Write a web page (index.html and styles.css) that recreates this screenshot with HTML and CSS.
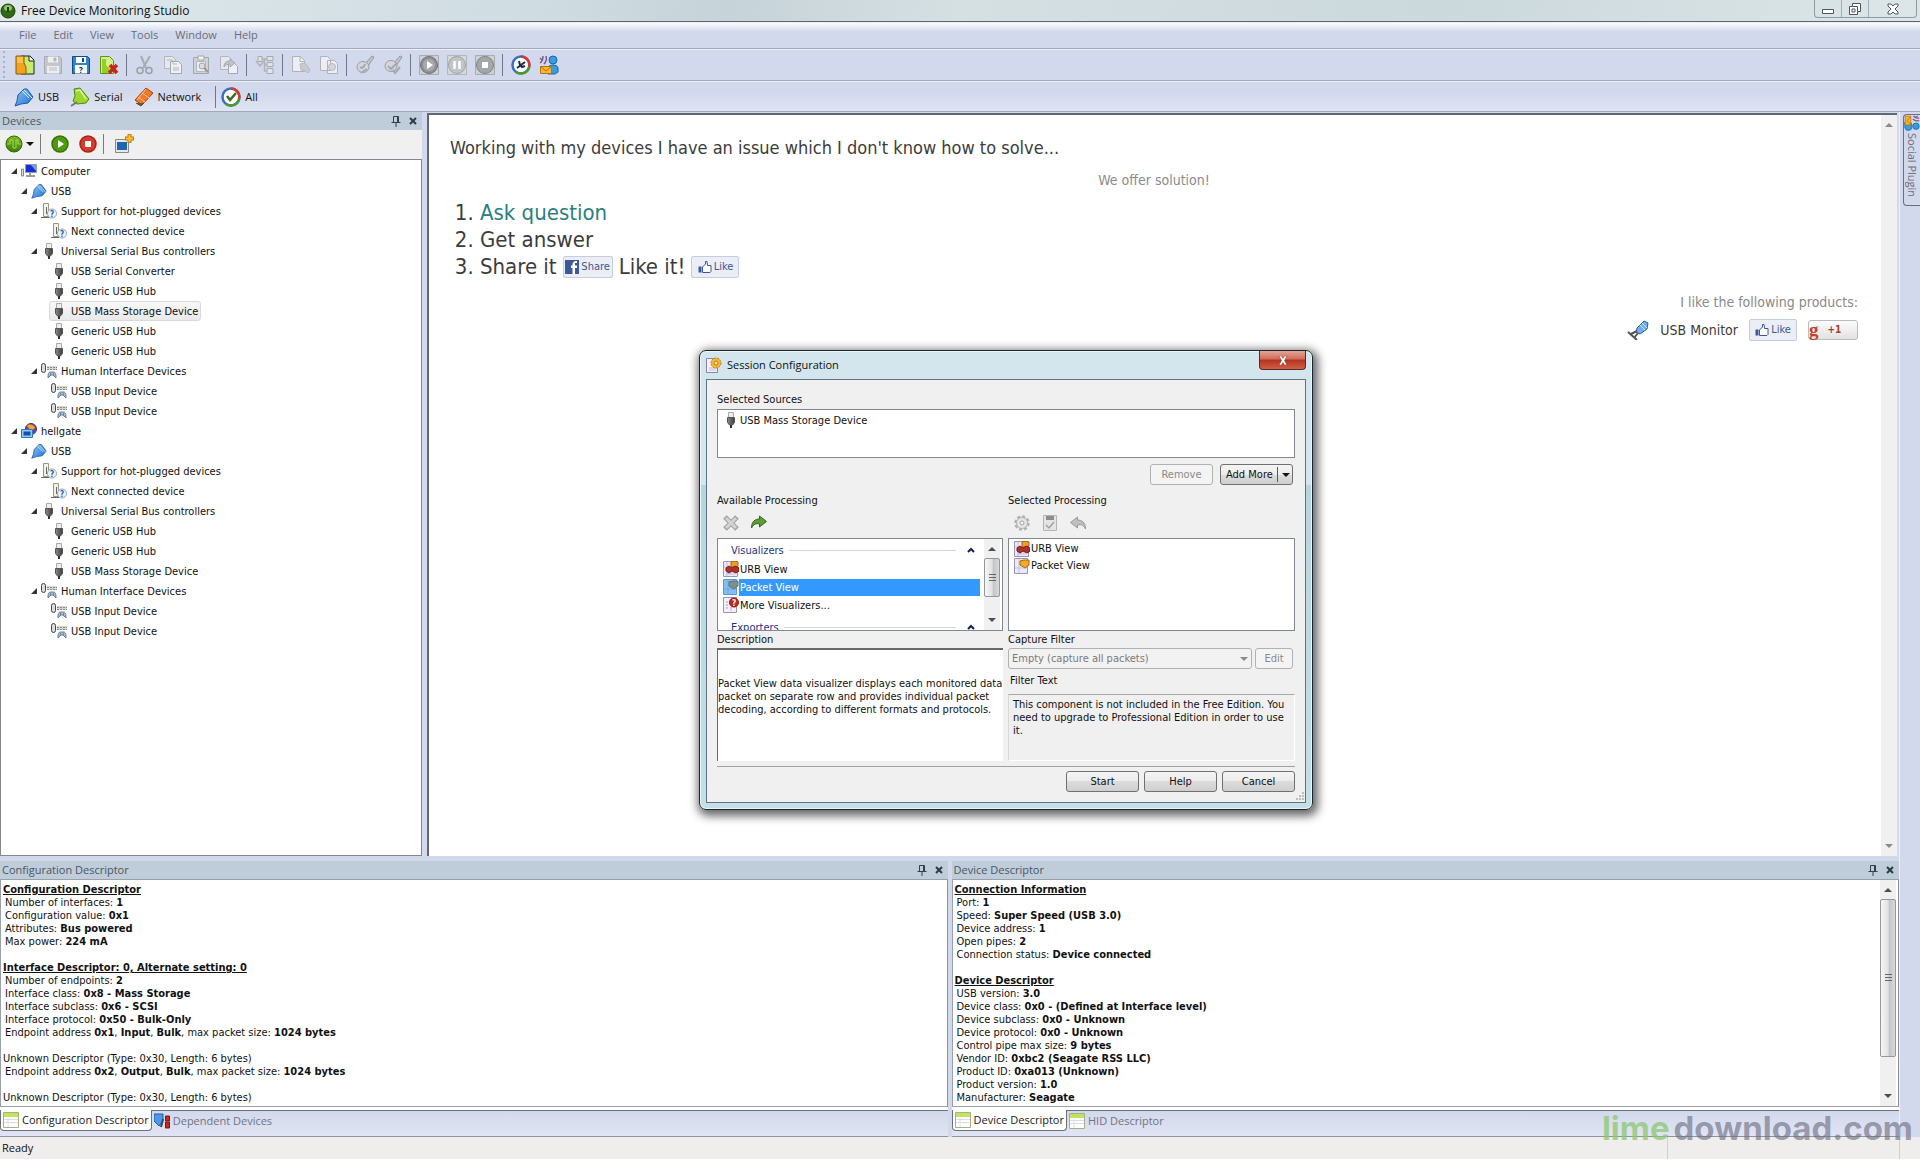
FILE: index.html
```html
<!DOCTYPE html>
<html lang="en">
<head>
  <meta charset="UTF-8">
  <meta name="viewport" content="width=device-width, initial-scale=1">
  <title>Free Device Monitoring Studio</title>
  <link rel="stylesheet" href="styles.css">
</head>
<body>
  <!-- Gradients must stay rendered, the sprite itself is hidden -->
  <svg class="gradients" aria-hidden="true">
    <defs>
      <linearGradient id="gBlue" x1="0" y1="0" x2="1" y2="1"><stop offset="0" stop-color="#8cc6fa"/><stop offset="1" stop-color="#1d6fd0"/></linearGradient>
      <linearGradient id="gGreen" x1="0" y1="0" x2="0" y2="1"><stop offset="0" stop-color="#7fbf1c"/><stop offset="1" stop-color="#3b7d06"/></linearGradient>
      <linearGradient id="gPlug" x1="0" y1="0" x2="1" y2="0"><stop offset="0" stop-color="#8a8a8a"/><stop offset="1" stop-color="#3c3c3c"/></linearGradient>
    </defs>
  </svg>
  <svg class="sprite" aria-hidden="true">
    <symbol id="app" viewBox="0 0 16 16"><circle cx="8" cy="8" r="7" fill="#2f6b12" stroke="#1c3d0c"/><ellipse cx="8" cy="5" rx="4" ry="3" fill="#8fc763"/><path d="M8 4v5" stroke="#1c3d0c" stroke-width="2"/></symbol>
    <symbol id="open" viewBox="0 0 20 20"><path d="M6 1h9l4 4v14H6z" fill="#c9ea6a" stroke="#222"/><path d="M14 1v5h5" fill="#fff" stroke="#222"/><path d="M1 1h8v7l2 4v7H1z" fill="#f2a21e" stroke="#8a5a10"/><path d="M2 2h6v6H2z" fill="#f8c04c"/></symbol>
    <symbol id="save-off" viewBox="0 0 20 20"><path d="M1.500 1.500h15l2 2v15h-17z" fill="#c4c6ca" stroke="#a9abb0"/><path d="M5 1.500h10v6H5zM4 11h12v7.500H4z" fill="#eceef2"/><path d="M11 3h2v3h-2zM6 13h8M6 15h8" fill="#a9abb0" stroke="#bbb"/></symbol>
    <symbol id="save-as" viewBox="0 0 20 20"><path d="M1.500 1.500h15l2 2v15h-17z" fill="#2f86cf" stroke="#0d4a86"/><path d="M5 2h10v6H5zM4 10h12v8.500H4z" fill="#fff"/><path d="M11 3h2v4h-2z" fill="#0d4a86"/><text x="10" y="17.500" font-size="8" font-weight="700" text-anchor="middle" fill="#123">?</text></symbol>
    <symbol id="close-doc" viewBox="0 0 20 20"><path d="M1.500 1.500h9l4 4v13h-13z" fill="#d6f08a" stroke="#5c9410"/><path d="M3 4h4v6l4 4-2 4H3z" fill="#97cc2b"/><path d="M11 10l7 8M18 10l-8 8" stroke="#c3271b" stroke-width="3.500"/></symbol>
    <symbol id="cut" viewBox="0 0 20 20"><path d="M6 1l5 12M15 1L8 13" stroke="#a9abb0" stroke-width="2" fill="none"/><circle cx="5" cy="15.500" r="3" fill="none" stroke="#9c9ea4" stroke-width="1.500"/><circle cx="14" cy="15.500" r="3" fill="none" stroke="#9c9ea4" stroke-width="1.500"/></symbol>
    <symbol id="copy" viewBox="0 0 20 20"><path d="M1.500 1.500h8l3 3v9h-11z" fill="#e6e8ee" stroke="#b4b6bc"/><path d="M7.500 6.500h8l3 3v9h-11z" fill="#eef0f5" stroke="#a6a8ae"/><path d="M4 5h6v4h4M10 13h6M10 15h6" fill="none" stroke="#b4b6bc"/></symbol>
    <symbol id="paste" viewBox="0 0 20 20"><path d="M2.500 2.500h15v16h-15z" fill="#d0d2d8" stroke="#a4a6ac"/><path d="M7 1h6v4H7z" fill="#f2f2f5" stroke="#a4a6ac"/><path d="M5.500 6.500h9v10h-9z" fill="#eceef3" stroke="#b4b6bc"/><circle cx="11" cy="11" r="3" fill="#dadce2" stroke="#a4a6ac"/><path d="M13 13l4 4" stroke="#94969c" stroke-width="2"/></symbol>
    <symbol id="move" viewBox="0 0 20 20"><path d="M1.500 1.500h8l3 3v10h-11z" fill="#e6e8ee" stroke="#b4b6bc"/><path d="M9.500 8.500h6l3 3v7h-9z" fill="#eef0f5" stroke="#a6a8ae"/><path d="M5 12c0-5 3-6 6-6V4l5 4-5 4v-3c-3 0-4 1-6 3z" fill="#c2c4ca" stroke="#a6a8ae"/></symbol>
    <symbol id="struct" viewBox="0 0 20 20"><path d="M3 1.500h4v5H3zM12 1.500h6v4h-6zM12 7.500h6v4h-6zM12 13.500h6v5h-6z" fill="#e2e4ea" stroke="#a6a8ae"/><path d="M7 4h5M9.500 4v12H12M9.500 9.500H12M1 6l4 5 4-5" fill="none" stroke="#b0b2b8" stroke-width="1.500"/></symbol>
    <symbol id="find" viewBox="0 0 20 20"><path d="M1.500 1.500h8l4 4v11h-12z" fill="#eceef3" stroke="#b0b2b8"/><path d="M9 1.500v5h4" fill="none" stroke="#b0b2b8"/><path d="M9 9l5-1 3 4 2 3-2 3-3-2-4-1z" fill="#c8cad0" stroke="#b8bac0"/></symbol>
    <symbol id="find-all" viewBox="0 0 20 20"><path d="M1.500 1.500h7l3 3v11h-10zM8.500 5.500h7l3 3v10h-10z" fill="#eceef3" stroke="#b0b2b8"/><circle cx="13" cy="12" r="3.500" fill="#d4d6dc" stroke="#b8bac0"/></symbol>
    <symbol id="brush" viewBox="0 0 20 20"><path d="M10 9l7-8 2 1-6 9z" fill="#c6c8ce" stroke="#94969c"/><ellipse cx="8" cy="12" rx="6" ry="5.500" fill="#d4d6dc" stroke="#9c9ea4"/><path d="M5 12c2 2 4 0 5-3M6 18l6-4" stroke="#a6a8ae" stroke-width="2" fill="none"/></symbol>
    <symbol id="brush-tick" viewBox="0 0 20 20"><path d="M10 9l7-8 2 1-6 9z" fill="#c6c8ce" stroke="#94969c"/><ellipse cx="8" cy="11" rx="6" ry="5.500" fill="#d4d6dc" stroke="#9c9ea4"/><path d="M5 11l3 3 6-6M10 15l2 3 5-6" stroke="#a6a8ae" stroke-width="2" fill="none"/></symbol>
    <symbol id="play-off" viewBox="0 0 20 20"><path d="M.500.500h19v19H.500z" fill="#cfd0d4" stroke="#aaacb2"/><circle cx="10" cy="10" r="8.500" fill="#8f9196" stroke="#6e7076"/><circle cx="10" cy="10" r="6" fill="#a8aaae"/><path d="M8 6l6 4-6 4z" fill="#fff"/></symbol>
    <symbol id="pause-off" viewBox="0 0 20 20"><path d="M.500.500h19v19H.500z" fill="#d6d7da" stroke="#b4b6bc"/><circle cx="10" cy="10" r="8.500" fill="#c2c4c8" stroke="#a0a2a8"/><path d="M7.500 6v8M12.500 6v8" stroke="#fff" stroke-width="2.500"/></symbol>
    <symbol id="stop-off" viewBox="0 0 20 20"><path d="M.500.500h19v19H.500z" fill="#cfd0d4" stroke="#aaacb2"/><circle cx="10" cy="10" r="8.500" fill="#a4a6aa" stroke="#808288"/><path d="M7 7h6v6H7z" fill="#fff"/></symbol>
    <symbol id="ring" viewBox="0 0 20 20"><circle cx="10" cy="10" r="8.500" fill="#fff" stroke="#3b6fc4" stroke-width="2.500"/><path d="M10 1.500A8.500 8.500 0 0 1 18 12" fill="none" stroke="#d83a2a" stroke-width="2.500"/><path d="M18 12a8.500 8.500 0 0 1-13 5" fill="none" stroke="#4c9a2a" stroke-width="2.500"/></symbol>
    <symbol id="gauge" viewBox="0 0 20 20"><use href="#ring"/><path d="M6 13l8-6M8 6l1 4 2 2 3-1" stroke="#1c2a44" stroke-width="2" fill="none"/></symbol>
    <symbol id="all" viewBox="0 0 20 20"><use href="#ring"/><path d="M6 9l3 4 6-7" stroke="#3c6e22" stroke-width="2.500" fill="none"/></symbol>
    <symbol id="social" viewBox="0 0 20 20"><path d="M1 3l2 2M4 1c0 3 0 5-3 7M7 1c1 3 0 6-2 8" stroke="#7b5c8c" stroke-width="1.500" fill="none"/><circle cx="14" cy="5" r="4" fill="#3a9be0" stroke="#1767a8"/><path d="M9 19V13c0-4 10-4 10 0v4l-3 2z" fill="#3a9be0" stroke="#1767a8"/><path d="M1.500 11.500h11v7h-11z" fill="#f7b733" stroke="#b87208"/><path d="M2 12l5 4 5-4" fill="none" stroke="#b87208"/></symbol>
    <symbol id="usb" viewBox="0 0 20 20"><path d="M1 19l2-5 1-6 6-6 3 0 6 8-5 6-7 1z" fill="url(#gBlue)" stroke="#1d5aa8"/><path d="M10 3l8 8M8 4l7 7" stroke="#d0e8ff"/></symbol>
    <symbol id="serial" viewBox="0 0 20 20"><path d="M4 2l6-1 9 11-3 4-9 1-4-3 2-5z" fill="#9ad82c" stroke="#4c8a10"/><path d="M6 4l4-1 6 9" fill="none" stroke="#dff6a8" stroke-width="1.500"/><path d="M1 19l6-4" stroke="#777" stroke-width="2"/></symbol>
    <symbol id="network" viewBox="0 0 20 20"><path d="M1 13L12 1l7 5L8 18z" fill="#f07a28" stroke="#a4410c"/><path d="M4 10l7 5M8 6l7 5M12 2l-9 11" stroke="#fbc29a"/><path d="M2 16l5 3 3-3" fill="#6e5040" stroke="#553"/></symbol>
    <symbol id="chip" viewBox="0 0 18 18"><circle cx="9" cy="9" r="8" fill="url(#gGreen)" stroke="#2f6606"/><path d="M2 9h3V5h3v8h3V5h2v4h3" fill="none" stroke="#a4d468"/></symbol>
    <symbol id="play" viewBox="0 0 18 18"><circle cx="9" cy="9" r="8" fill="#4f9a0c" stroke="#34720a" stroke-width="1.500"/><path d="M7 5l6 4-6 4z" fill="#fff"/></symbol>
    <symbol id="stop" viewBox="0 0 18 18"><circle cx="9" cy="9" r="8" fill="#d63a2c" stroke="#a8241a" stroke-width="1.500"/><path d="M6 6h6v6H6z" fill="#fff"/></symbol>
    <symbol id="add-view" viewBox="0 0 20 20"><path d="M1.500 5.500h13v13h-13z" fill="#e8e8e8" stroke="#888"/><path d="M3 8h10v8H3z" fill="#1d66b4"/><path d="M15.500 0v9M11 4.500h9" stroke="#c97a0a" stroke-width="4"/><path d="M15.500 1v7M12 4.500h7" stroke="#fbc23c" stroke-width="2"/></symbol>
    <symbol id="computer" viewBox="0 0 16 16"><path d="M.500 6h2v7h-2z" fill="#ddd" stroke="#888"/><path d="M4.500 1.500h11v8h-11z" fill="#1a2fd0" stroke="#99a"/><path d="M10 2l5 0v6z" fill="#6fa0ff"/><path d="M9 10v2M5 13h9" stroke="#99a" stroke-width="2"/></symbol>
    <symbol id="host" viewBox="0 0 16 16"><circle cx="10" cy="6" r="5.500" fill="#7a3fa0" stroke="#4a2a6a"/><path d="M6 3c3-3 7-1 8 2l-4 3z" fill="#f5a81c"/><path d="M.500 6.500h11v8H.500z" fill="#8fc8f4" stroke="#2a78c0"/><path d="M2.500 8.500h7v4h-7z" fill="#1550a8"/></symbol>
    <symbol id="unknown" viewBox="0 0 16 16"><path d="M2.500.500h5v13h-5z" fill="#f2f2ea" stroke="#99987f"/><path d="M0 14.500h8M5.500 4v7" stroke="#666"/><circle cx="11" cy="10.500" r="4.500" fill="#eef5fc" stroke="#8fa3b8"/><text x="11" y="13.500" font-size="8" font-weight="700" text-anchor="middle" fill="#2a5fa8">?</text></symbol>
    <symbol id="plug" viewBox="0 0 16 16"><path d="M5.500.500h5v5h-5z" fill="#eee" stroke="#aaa"/><path d="M4.500 5.500h7v5l-2 2.500h-3l-2-2.500z" fill="url(#gPlug)" stroke="#555"/><path d="M8 13v3" stroke="#333" stroke-width="2"/></symbol>
    <symbol id="hid" viewBox="0 0 16 16"><rect x=".500" y=".500" width="4" height="9" rx="2" fill="#ddd" stroke="#444"/><path d="M6 3h10v4H6z" fill="#d4d6d8"/><path d="M6 4.500h10M6 6.500h10" stroke="#8a8a8a" stroke-dasharray="2 1"/><path d="M7 15c0-6 1-6 4-6s4 0 4 6l-3-3h-2z" fill="#a9bccb" stroke="#6c7f90"/><path d="M9 11h1M12 11h1" stroke="#1f5fb0"/></symbol>
    <symbol id="monitor-app" viewBox="0 0 22 20"><path d="M10 8l7-7 4 2-1 6-7 5-4-2z" fill="#6fb0f0" stroke="#2a5f9c"/><path d="M13 5l5 5M15 3l5 5" stroke="#cfe6fc"/><path d="M1 12l9 8M10 11l-6 3M11 13l-4 5" stroke="#555" stroke-width="2"/></symbol>
    <symbol id="thumb" viewBox="0 0 14 12"><path d="M.500 5.500h3v6h-3z" fill="#3b5998"/><path d="M4.500 6l3-3V.500h1.500l.500 4h3.500v6l-1 1H4.500z" fill="#fff" stroke="#3b5998"/></symbol>
    <symbol id="fb" viewBox="0 0 14 14"><path d="M0 0h14v14H0z" fill="#3b5998"/><path d="M12 3h-2v2.500h2V8h-2v6H7.500V8H6V5.500h1.500C7.500 2 8.500 1 12 1z" fill="#fff"/></symbol>
    <symbol id="session" viewBox="0 0 16 16"><path d="M.500 1.500h11v14H.500z" fill="#f5f1fa" stroke="#8a84a4"/><path d="M3 11h7M3 13h7" stroke="#c4bcd8"/><circle cx="10" cy="6" r="5" fill="#f7b733" stroke="#c07a10" stroke-dasharray="2 1"/><circle cx="10" cy="6" r="2" fill="#ffe7a8" stroke="#c07a10"/></symbol>
    <symbol id="x-off" viewBox="0 0 16 16"><path d="M2 2l12 12M14 2L2 14" stroke="#a0a0a0" stroke-width="5"/><path d="M3 3l10 10M13 3L3 13" stroke="#d4d4d4" stroke-width="3"/></symbol>
    <symbol id="add" viewBox="0 0 16 16"><path d="M.500 13c0-7 4-9 8-9V1l7 5.500-7 5.500V9C5 8 3 9 .500 13z" fill="#5c9c34" stroke="#33691a"/></symbol>
    <symbol id="undo-off" viewBox="0 0 16 16"><path d="M15.500 14c0-7-4-9-8-9V2l-7 5.500L7.500 13v-3c4-1 6 0 8 4z" fill="#c0c0c0" stroke="#999"/></symbol>
    <symbol id="gear-off" viewBox="0 0 16 16"><circle cx="8" cy="8" r="6.500" fill="#e2e2e2" stroke="#b0b0b0" stroke-width="2.500" stroke-dasharray="3 2"/><circle cx="8" cy="8" r="5.500" fill="#e6e6e6" stroke="#b4b4b4"/><circle cx="8" cy="8" r="2" fill="#f4f4f4" stroke="#a4a4a4"/></symbol>
    <symbol id="disk-off" viewBox="0 0 16 16"><path d="M1.500.500h13v15h-13z" fill="#e4e4e4" stroke="#b4b4b4"/><path d="M4 1h8v4H4z" fill="#8c8c8c"/><path d="M4 10l3 3 5-6" fill="none" stroke="#a0a0a0" stroke-width="1.500"/></symbol>
    <symbol id="urb" viewBox="0 0 16 16"><path d="M.500.500h14v15H.500z" fill="#edeaf8" stroke="#9a94b8"/><path d="M1 6h13M3 11h9M3 13h9M4 1v14" stroke="#c4bee0"/><path d="M8 1l3-1 4 1v4l-4 2-3-2z" fill="#f0a020" stroke="#a8660c"/><path d="M3 7l3-2 3 2 3-2 4 2v3l-3 2-4-2-3 2-3-2z" fill="#b0302a" stroke="#78181a"/></symbol>
    <symbol id="packet" viewBox="0 0 16 16"><path d="M.500.500h13v15H.500z" fill="#edeaf8" stroke="#9a94b8"/><path d="M1 10h12M5 1v14" stroke="#c4bee0"/><path d="M6 3l4-1 5 0v5l-4 3-5-3z" fill="#f2ac24" stroke="#a8660c"/></symbol>
    <symbol id="packet-sel" viewBox="0 0 16 16"><path d="M.500.500h13v15H.500z" fill="#86bdf2" stroke="#5a98d4"/><path d="M1 10h12M5 1v14" stroke="#6aa8e6"/><path d="M6 3l4-1 5 0v5l-4 3-5-3z" fill="#7f9186" stroke="#5a7480"/></symbol>
    <symbol id="more" viewBox="0 0 16 16"><path d="M.500.500h13v15H.500z" fill="#f4f0fa" stroke="#9a94b8"/><path d="M4 4v9M8 10v4" stroke="#d08a9a" stroke-dasharray="2 1"/><circle cx="11" cy="5.500" r="4.500" fill="#c4281c" stroke="#8a1410"/><text x="11" y="8.500" font-size="8" font-weight="700" text-anchor="middle" fill="#fff">?</text></symbol>
    <symbol id="sheet" viewBox="0 0 16 16"><path d="M.500.500h15v15H.500z" fill="#fff" stroke="#a4b08c"/><path d="M1 1h14v4H1z" fill="#c3e35a"/><path d="M1 7.500h14M1 10.500h14M5 6v9" stroke="#dcdce8"/></symbol>
    <symbol id="depend" viewBox="0 0 16 16"><path d="M0 1h9v7l-4 5-5-5z" fill="#4a9ae8" stroke="#1d5aa8"/><path d="M7 14l2-8" stroke="#445" stroke-width="2"/><path d="M11.500 3h4v5h-4zM11.500 9h4v6h-4z" fill="#c8281e" stroke="#7a1410"/></symbol>
    <symbol id="pin" viewBox="0 0 10 12"><path d="M2.500 7V1.500h5V7M6.500 2v5M.500 7.500h9M5 8v4" fill="none" stroke="#2f3f4f"/></symbol>
    <symbol id="close" viewBox="0 0 8 8"><path d="M1 1l6 6M7 1L1 7" stroke="#2c3a48" stroke-width="2"/></symbol>
    <symbol id="expand" viewBox="0 0 6 6"><path d="M6 0v6H0z" fill="#333"/></symbol>
    <symbol id="up" viewBox="0 0 8 4"><path d="M4 0l4 4H0z" fill="currentColor"/></symbol>
    <symbol id="down" viewBox="0 0 8 4"><path d="M0 0h8L4 4z" fill="currentColor"/></symbol>
    <symbol id="chevron" viewBox="0 0 8 6"><path d="M1 5l3-3 3 3" fill="none" stroke="#10205c" stroke-width="2"/></symbol>
  </svg>

  <header class="titlebar">
    <svg class="i16"><use href="#app"/></svg>
    <h1>Free Device Monitoring Studio</h1>
    <div class="window-buttons">
      <button type="button" aria-label="Minimize"><svg viewBox="0 0 12 12"><path d="M.500 6.500h11v4H.500z" fill="#fff" stroke="#4a5560"/></svg></button>
      <button type="button" aria-label="Restore"><svg viewBox="0 0 12 12"><path d="M3.500.500h8v8h-3v3h-8v-8h3z" fill="#fff" stroke="#4a5560"/><path d="M3.500 3.500h5v5M3 6h3v3H3z" fill="none" stroke="#4a5560"/></svg></button>
      <button type="button" class="wide" aria-label="Close"><svg viewBox="0 0 12 12"><path d="M1 1h3l2 2 2-2h3v2L8 6l3 3v2H8L6 9l-2 2H1V9l3-3-3-3z" fill="#fff" stroke="#4a5560"/></svg></button>
    </div>
  </header>

  <nav class="bar menu">
    <button type="button">File</button>
    <button type="button">Edit</button>
    <button type="button">View</button>
    <button type="button">Tools</button>
    <button type="button">Window</button>
    <button type="button">Help</button>
  </nav>

  <div class="bar tools">
    <button type="button" aria-label="Open"><svg class="i20"><use href="#open"/></svg></button>
    <button type="button" aria-label="Save" disabled><svg class="i20"><use href="#save-off"/></svg></button>
    <button type="button" aria-label="Save as"><svg class="i20"><use href="#save-as"/></svg></button>
    <button type="button" aria-label="Close document"><svg class="i20"><use href="#close-doc"/></svg></button>
    <i class="sep"></i>
    <button type="button" aria-label="Cut" disabled><svg class="i20"><use href="#cut"/></svg></button>
    <button type="button" aria-label="Copy" disabled><svg class="i20"><use href="#copy"/></svg></button>
    <button type="button" aria-label="Paste" disabled><svg class="i20"><use href="#paste"/></svg></button>
    <button type="button" aria-label="Copy to" disabled><svg class="i20"><use href="#move"/></svg></button>
    <i class="sep"></i>
    <button type="button" aria-label="Structure" disabled><svg class="i20"><use href="#struct"/></svg></button>
    <i class="sep"></i>
    <button type="button" aria-label="Find" disabled><svg class="i20"><use href="#find"/></svg></button>
    <button type="button" aria-label="Find all" disabled><svg class="i20"><use href="#find-all"/></svg></button>
    <i class="sep"></i>
    <button type="button" aria-label="Clear" disabled><svg class="i20"><use href="#brush"/></svg></button>
    <button type="button" aria-label="Clear all" disabled><svg class="i20"><use href="#brush-tick"/></svg></button>
    <i class="sep"></i>
    <button type="button" aria-label="Start" disabled><svg class="i20"><use href="#play-off"/></svg></button>
    <button type="button" aria-label="Pause" disabled><svg class="i20"><use href="#pause-off"/></svg></button>
    <button type="button" aria-label="Stop" disabled><svg class="i20"><use href="#stop-off"/></svg></button>
    <i class="sep"></i>
    <button type="button" aria-label="Monitor"><svg class="i20"><use href="#gauge"/></svg></button>
    <button type="button" aria-label="Social"><svg class="i20"><use href="#social"/></svg></button>
  </div>

  <div class="bar filters">
    <button type="button"><svg class="i20"><use href="#usb"/></svg>USB</button>
    <button type="button"><svg class="i20"><use href="#serial"/></svg>Serial</button>
    <button type="button"><svg class="i20"><use href="#network"/></svg>Network</button>
    <i class="sep"></i>
    <button type="button"><svg class="i20"><use href="#all"/></svg>All</button>
  </div>

  <div class="workspace">
    <div class="main">
      <div class="upper">
        <section class="panel devices">
          <div class="panel-head">
            <h2>Devices</h2>
            <button type="button" aria-label="Pin"><svg class="pin"><use href="#pin"/></svg></button>
            <button type="button" aria-label="Close"><svg class="cross"><use href="#close"/></svg></button>
          </div>
          <div class="device-tools">
            <button type="button" class="drop" aria-label="Device"><svg class="i18"><use href="#chip"/></svg><svg class="arrow"><use href="#down"/></svg></button>
            <i class="sep"></i>
            <button type="button" aria-label="Start"><svg class="i18"><use href="#play"/></svg></button>
            <button type="button" aria-label="Stop"><svg class="i18"><use href="#stop"/></svg></button>
            <i class="sep"></i>
            <button type="button" aria-label="Add view"><svg class="i20"><use href="#add-view"/></svg></button>
          </div>
          <ul class="tree">
            <li><div class="row"><svg class="twist"><use href="#expand"/></svg><span class="node"><svg class="i16"><use href="#computer"/></svg>Computer</span></div>
              <ul>
                <li><div class="row"><svg class="twist"><use href="#expand"/></svg><span class="node"><svg class="i16"><use href="#usb"/></svg>USB</span></div>
                  <ul>
                    <li><div class="row"><svg class="twist"><use href="#expand"/></svg><span class="node"><svg class="i16"><use href="#unknown"/></svg>Support for hot-plugged devices</span></div>
                      <ul>
                        <li class="row leaf"><span class="node"><svg class="i16"><use href="#unknown"/></svg>Next connected device</span></li>
                      </ul>
                    </li>
                    <li><div class="row"><svg class="twist"><use href="#expand"/></svg><span class="node"><svg class="i16"><use href="#plug"/></svg>Universal Serial Bus controllers</span></div>
                      <ul>
                        <li class="row leaf"><span class="node"><svg class="i16"><use href="#plug"/></svg>USB Serial Converter</span></li>
                        <li class="row leaf"><span class="node"><svg class="i16"><use href="#plug"/></svg>Generic USB Hub</span></li>
                        <li class="row leaf"><span class="node current"><svg class="i16"><use href="#plug"/></svg>USB Mass Storage Device</span></li>
                        <li class="row leaf"><span class="node"><svg class="i16"><use href="#plug"/></svg>Generic USB Hub</span></li>
                        <li class="row leaf"><span class="node"><svg class="i16"><use href="#plug"/></svg>Generic USB Hub</span></li>
                      </ul>
                    </li>
                    <li><div class="row"><svg class="twist"><use href="#expand"/></svg><span class="node"><svg class="i16"><use href="#hid"/></svg>Human Interface Devices</span></div>
                      <ul>
                        <li class="row leaf"><span class="node"><svg class="i16"><use href="#hid"/></svg>USB Input Device</span></li>
                        <li class="row leaf"><span class="node"><svg class="i16"><use href="#hid"/></svg>USB Input Device</span></li>
                      </ul>
                    </li>
                  </ul>
                </li>
              </ul>
            </li>
            <li><div class="row"><svg class="twist"><use href="#expand"/></svg><span class="node"><svg class="i16"><use href="#host"/></svg>hellgate</span></div>
              <ul>
                <li><div class="row"><svg class="twist"><use href="#expand"/></svg><span class="node"><svg class="i16"><use href="#usb"/></svg>USB</span></div>
                  <ul>
                    <li><div class="row"><svg class="twist"><use href="#expand"/></svg><span class="node"><svg class="i16"><use href="#unknown"/></svg>Support for hot-plugged devices</span></div>
                      <ul>
                        <li class="row leaf"><span class="node"><svg class="i16"><use href="#unknown"/></svg>Next connected device</span></li>
                      </ul>
                    </li>
                    <li><div class="row"><svg class="twist"><use href="#expand"/></svg><span class="node"><svg class="i16"><use href="#plug"/></svg>Universal Serial Bus controllers</span></div>
                      <ul>
                        <li class="row leaf"><span class="node"><svg class="i16"><use href="#plug"/></svg>Generic USB Hub</span></li>
                        <li class="row leaf"><span class="node"><svg class="i16"><use href="#plug"/></svg>Generic USB Hub</span></li>
                        <li class="row leaf"><span class="node"><svg class="i16"><use href="#plug"/></svg>USB Mass Storage Device</span></li>
                      </ul>
                    </li>
                    <li><div class="row"><svg class="twist"><use href="#expand"/></svg><span class="node"><svg class="i16"><use href="#hid"/></svg>Human Interface Devices</span></div>
                      <ul>
                        <li class="row leaf"><span class="node"><svg class="i16"><use href="#hid"/></svg>USB Input Device</span></li>
                        <li class="row leaf"><span class="node"><svg class="i16"><use href="#hid"/></svg>USB Input Device</span></li>
                      </ul>
                    </li>
                  </ul>
                </li>
              </ul>
            </li>
          </ul>
        </section>

        <main class="document">
          <div class="page">
            <p class="lead">Working with my devices I have an issue which I don't know how to solve...</p>
            <p class="offer">We offer solution!</p>
            <ol class="steps">
              <li><a href="#">Ask question</a></li>
              <li>Get answer</li>
              <li><div class="share">Share it <button type="button" class="fb-button fb-share"><svg class="fb"><use href="#fb"/></svg>Share</button> Like it! <button type="button" class="fb-button"><svg class="thumb"><use href="#thumb"/></svg>Like</button></div></li>
            </ol>
            <div class="products">
              <p>I like the following products:</p>
              <div class="product">
                <svg class="product-icon"><use href="#monitor-app"/></svg>
                <span>USB Monitor</span>
                <button type="button" class="fb-button"><svg class="thumb"><use href="#thumb"/></svg>Like</button>
                <button type="button" class="plus-one"><span class="g">g</span>+1</button>
              </div>
            </div>
          </div>
          <div class="scroll idle"><svg class="sarrow"><use href="#up"/></svg><svg class="sarrow"><use href="#down"/></svg></div>
        </main>
      </div>

      <div class="lower">
        <section class="panel">
          <div class="panel-head">
            <h2>Configuration Descriptor</h2>
            <button type="button" aria-label="Pin"><svg class="pin"><use href="#pin"/></svg></button>
            <button type="button" aria-label="Close"><svg class="cross"><use href="#close"/></svg></button>
          </div>
          <div class="report">
            <div class="report-text">
              <h3>Configuration Descriptor</h3>
              <p>Number of interfaces: <b>1</b></p>
              <p>Configuration value: <b>0x1</b></p>
              <p>Attributes: <b>Bus powered</b></p>
              <p>Max power: <b>224 mA</b></p>
              <h3>Interface Descriptor: 0, Alternate setting: 0</h3>
              <p>Number of endpoints: <b>2</b></p>
              <p>Interface class: <b>0x8 - Mass Storage</b></p>
              <p>Interface subclass: <b>0x6 - SCSI</b></p>
              <p>Interface protocol: <b>0x50 - Bulk-Only</b></p>
              <p>Endpoint address <b>0x1</b>, <b>Input</b>, <b>Bulk</b>, max packet size: <b>1024 bytes</b></p>
              <p class="raw">Unknown Descriptor (Type: 0x30, Length: 6 bytes)</p>
              <p>Endpoint address <b>0x2</b>, <b>Output</b>, <b>Bulk</b>, max packet size: <b>1024 bytes</b></p>
              <p class="raw">Unknown Descriptor (Type: 0x30, Length: 6 bytes)</p>
            </div>
          </div>
          <div class="tabs">
            <button type="button" class="active"><svg class="i16"><use href="#sheet"/></svg>Configuration Descriptor</button>
            <button type="button"><svg class="i16"><use href="#depend"/></svg>Dependent Devices</button>
          </div>
        </section>

        <section class="panel">
          <div class="panel-head">
            <h2>Device Descriptor</h2>
            <button type="button" aria-label="Pin"><svg class="pin"><use href="#pin"/></svg></button>
            <button type="button" aria-label="Close"><svg class="cross"><use href="#close"/></svg></button>
          </div>
          <div class="report">
            <div class="report-text">
              <h3>Connection Information</h3>
              <p>Port: <b>1</b></p>
              <p>Speed: <b>Super Speed (USB 3.0)</b></p>
              <p>Device address: <b>1</b></p>
              <p>Open pipes: <b>2</b></p>
              <p>Connection status: <b>Device connected</b></p>
              <h3>Device Descriptor</h3>
              <p>USB version: <b>3.0</b></p>
              <p>Device class: <b>0x0 - (Defined at Interface level)</b></p>
              <p>Device subclass: <b>0x0 - Unknown</b></p>
              <p>Device protocol: <b>0x0 - Unknown</b></p>
              <p>Control pipe max size: <b>9 bytes</b></p>
              <p>Vendor ID: <b>0xbc2 (Seagate RSS LLC)</b></p>
              <p>Product ID: <b>0xa013 (Unknown)</b></p>
              <p>Product version: <b>1.0</b></p>
              <p>Manufacturer: <b>Seagate</b></p>
            </div>
            <div class="scroll"><svg class="sarrow"><use href="#up"/></svg><div class="track"><div class="thumb-bar" style="height: 84%"></div></div><svg class="sarrow"><use href="#down"/></svg></div>
          </div>
          <div class="tabs">
            <button type="button" class="active"><svg class="i16"><use href="#sheet"/></svg>Device Descriptor</button>
            <button type="button"><svg class="i16"><use href="#sheet"/></svg>HID Descriptor</button>
          </div>
        </section>
      </div>
    </div>

    <aside class="dock">
      <button type="button"><svg class="i16"><use href="#social"/></svg>Social Plugin</button>
    </aside>
  </div>

  <footer class="status"><span>Ready</span><span></span><span></span></footer>

  <div class="watermark"><span>lime</span>download.com</div>

  <div class="dialog" role="dialog" aria-labelledby="dialog-title">
    <div class="dialog-head">
      <svg class="i16"><use href="#session"/></svg>
      <h2 id="dialog-title">Session Configuration</h2>
      <button type="button" class="dialog-close" aria-label="Close"><svg viewBox="0 0 10 9"><path d="M1 0h2.500L5 2.500 6.500 0H9L6.500 4.500 9 9H6.500L5 6.500 3.500 9H1l2.500-4.500z" fill="#fff" stroke="#6a3a34" stroke-width=".500"/></svg></button>
    </div>
    <form class="dialog-body">
      <div class="label" id="lbl-sources">Selected Sources</div>
      <ul class="box sources" aria-labelledby="lbl-sources">
        <li><svg class="i16"><use href="#plug"/></svg>USB Mass Storage Device</li>
      </ul>
      <div class="source-actions">
        <button type="button" class="btn" disabled>Remove</button>
        <button type="button" class="btn split">Add More<i></i><svg class="arrow"><use href="#down"/></svg></button>
      </div>
      <div class="columns">
        <div class="col">
          <div class="label" id="lbl-available">Available Processing</div>
          <div class="mini-tools">
            <button type="button" aria-label="Remove" disabled><svg class="i16"><use href="#x-off"/></svg></button>
            <button type="button" aria-label="Add"><svg class="i16"><use href="#add"/></svg></button>
          </div>
          <div class="box list" aria-labelledby="lbl-available">
            <div class="groups">
              <div class="group"><span>Visualizers</span><i></i><svg class="chevron"><use href="#chevron"/></svg></div>
              <ul>
                <li><svg class="i16"><use href="#urb"/></svg><span>URB View</span></li>
                <li class="selected"><svg class="i16"><use href="#packet-sel"/></svg><span>Packet View</span></li>
                <li><svg class="i16"><use href="#more"/></svg><span>More Visualizers...</span></li>
              </ul>
              <div class="group"><span>Exporters</span><i></i><svg class="chevron"><use href="#chevron"/></svg></div>
            </div>
            <div class="scroll"><svg class="sarrow"><use href="#up"/></svg><div class="track"><div class="thumb-bar" style="height: 74%"></div></div><svg class="sarrow"><use href="#down"/></svg></div>
          </div>
          <div class="label">Description</div>
          <div class="description">Packet View data visualizer displays each monitored data<br>packet on separate row and provides individual packet<br>decoding, according to different formats and protocols.</div>
        </div>
        <div class="col">
          <div class="label" id="lbl-selected">Selected Processing</div>
          <div class="mini-tools">
            <button type="button" aria-label="Settings" disabled><svg class="i16"><use href="#gear-off"/></svg></button>
            <button type="button" aria-label="Save" disabled><svg class="i16"><use href="#disk-off"/></svg></button>
            <button type="button" aria-label="Undo" disabled><svg class="i16"><use href="#undo-off"/></svg></button>
          </div>
          <ul class="box list chosen" aria-labelledby="lbl-selected">
            <li><svg class="i16"><use href="#urb"/></svg>URB View</li>
            <li><svg class="i16"><use href="#packet"/></svg>Packet View</li>
          </ul>
          <label class="label" for="filter">Capture Filter</label>
          <div class="filter-row">
            <span class="select-wrap">
              <select id="filter" disabled><option>Empty (capture all packets)</option></select>
              <svg class="arrow"><use href="#down"/></svg>
            </span>
            <button type="button" class="btn" disabled>Edit</button>
          </div>
          <div class="label filter-label">Filter Text</div>
          <div class="filter-text">This component is not included in the Free Edition. You need to upgrade to Professional Edition in order to use it.</div>
        </div>
      </div>
      <div class="dialog-actions">
        <button type="button" class="btn">Start</button>
        <button type="button" class="btn">Help</button>
        <button type="button" class="btn">Cancel</button>
      </div>
      <svg class="grip" viewBox="0 0 9 9"><path d="M7 1h2M7 4h2M7 7h2M4 4h2M4 7h2M1 7h2" stroke="#c4bcbc" stroke-width="2"/></svg>
    </form>
  </div>
</body>
</html>
```
FILE: styles.css
```css
:root {
  --bar: #d3d9ec;
  --head: #bfcdda;
  --line: #828790;
  --ui: Tahoma, 'DejaVu Sans Condensed', 'Noto Sans', sans-serif;
  --title: 'Open Sans', 'Noto Sans', sans-serif;
}
* {
  box-sizing: border-box;
  margin: 0;
  padding: 0;
}
body {
  font: 11px/13px var(--ui);
  color: #111;
  background: #fff;
  display: flex;
  flex-direction: column;
  height: 100vh;
  overflow: hidden;
}
ul { list-style: none; }
button {
  font: inherit;
  color: inherit;
  background: none;
  border: none;
}
svg { display: block; flex: none; }
.gradients { position: absolute; width: 0; height: 0; }
.sprite { display: none; }
.i16 { width: 16px; height: 16px; }
.i18 { width: 18px; height: 18px; }
.i20 { width: 20px; height: 20px; }
.arrow { width: 8px; height: 4px; }
.pin { width: 10px; height: 12px; }
.cross { width: 8px; height: 8px; }

/* Title bar */
.titlebar {
  display: flex;
  align-items: center;
  gap: 5px;
  height: 22px;
  background: linear-gradient(100deg, #dfe9ed 0%, #cfdce1 28%, #c6d3d8 38%, #d5e0e3 50%, #cbd8dc 75%, #dce6e8 100%);
  border-bottom: 1px solid #5c646e;
}
.titlebar h1 {
  flex: 1;
  font: 12px/20px var(--title);
}
.window-buttons {
  display: flex;
  align-self: flex-start;
  height: 18px;
  margin-right: 3px;
  border: 1px solid #8e9ba3;
  border-top: none;
  border-radius: 0 0 4px 4px;
}
.window-buttons button {
  display: flex;
  align-items: center;
  justify-content: center;
  width: 27px;
  border-right: 1px solid #a3afb6;
}
.window-buttons button:last-child { border-right: none; }
.window-buttons .wide { width: 47px; }
.window-buttons svg { width: 12px; height: 12px; }

/* Tool bars */
.bar {
  display: flex;
  align-items: center;
  padding-left: 11px;
  background: radial-gradient(circle at 4px 3px, #a9b1c6 1px, transparent 1px) 0 0 / 8px 5px repeat-y, var(--bar);
  border-bottom: 1px solid #a4a9b8;
  box-shadow: inset 0 1px #eef0f8;
  font: 11px/16px var(--title);
}
.bar .sep {
  width: 8px;
  height: 22px;
  background: linear-gradient(#6f7688, #6f7688) 3px 0 / 1px 100% no-repeat;
}
.menu {
  gap: 1px;
  height: 27px;
  color: #6a6d78;
  background: linear-gradient(#fff, transparent 10px), var(--bar);
}
.menu button { padding: 0 8px; }
.tools { height: 32px; }
.tools button {
  display: flex;
  justify-content: center;
  width: 28px;
}
.filters {
  height: 31px;
  padding: 1px 0 0 14px;
  background: linear-gradient(var(--bar) 40%, #e0e4f4);
}
.filters button {
  display: flex;
  align-items: center;
  gap: 4px;
  padding-right: 11px;
}
.filters .sep { width: 9px; }

/* Layout */
.workspace {
  flex: 1;
  display: flex;
  min-height: 0;
  background: var(--bar);
}
.main {
  flex: 1;
  display: flex;
  flex-direction: column;
  gap: 5px;
  min-width: 0;
}
.upper {
  flex: 1;
  display: flex;
  gap: 5px;
  min-height: 0;
}
.lower {
  display: grid;
  grid-template-columns: 1fr 1fr;
  gap: 4px;
}
.panel {
  display: flex;
  flex-direction: column;
  min-width: 0;
}
.panel-head {
  display: flex;
  align-items: center;
  gap: 8px;
  height: 18px;
  padding: 0 5px 0 2px;
  background: var(--head);
}
.panel-head h2 {
  flex: 1;
  font: 11px/16px var(--title);
  color: #4a5663;
}

/* Devices */
.devices { width: 422px; }
.device-tools {
  display: flex;
  align-items: center;
  gap: 10px;
  height: 29px;
  padding: 0 0 2px 5px;
  background: #f0f0f0;
}
.device-tools .drop {
  display: flex;
  align-items: center;
  gap: 3px;
}
.device-tools .sep {
  width: 1px;
  height: 20px;
  margin-left: -4px;
  background: #7a7a7a;
}
.tree {
  flex: 1;
  padding-top: 1px;
  background: #fff;
  border: 1px solid var(--line);
}
.tree ul { padding-left: 10px; }
.row {
  display: flex;
  align-items: center;
  height: 20px;
  padding-left: 10px;
}
.leaf { padding-left: 18px; }
.twist {
  width: 6px;
  height: 6px;
  margin-right: 2px;
}
.node {
  display: flex;
  align-items: center;
  gap: 4px;
  height: 20px;
  padding: 0 2px 0 1px;
  border: 1px solid transparent;
  border-radius: 3px;
}
.current {
  background: linear-gradient(#f8f8f8, #e9e9e9);
  border-color: #d9d9d9;
}

/* Document */
.document {
  flex: 1;
  display: flex;
  min-width: 0;
  margin: 1px 2px 0 0;
  background: #fff;
  border: solid #62666e;
  border-width: 2px 0 0 2px;
  color: #3c3c3c;
}
.page {
  flex: 1;
  padding: 21px 23px 0 21px;
}
.lead { font-size: 18px; line-height: 24px; }
.offer {
  padding: 10px 0 9px;
  font-size: 14px;
  line-height: 20px;
  text-align: center;
  color: #8a8a8a;
}
.steps {
  padding-left: 30px;
  font-size: 22px;
  line-height: 27px;
}
.steps a { color: #2a8080; text-decoration: none; }
.share {
  display: flex;
  align-items: center;
  gap: 6px;
}
.fb-button {
  display: flex;
  align-items: center;
  justify-content: center;
  gap: 2px;
  width: 48px;
  height: 22px;
  background: #eceef6;
  border: 1px solid #c5cbe0;
  border-radius: 2px;
  font: 11px/14px var(--ui);
  color: #3b5998;
}
.fb-share { width: 50px; }
.fb { width: 14px; height: 14px; }
.thumb { width: 14px; height: 12px; }
.products {
  display: flex;
  flex-direction: column;
  align-items: flex-end;
  gap: 7px;
  padding-top: 12px;
  font-size: 14px;
  line-height: 20px;
}
.products p { color: #8a8a8a; }
.product {
  display: flex;
  align-items: center;
  gap: 11px;
}
.product-icon { width: 22px; height: 20px; }
.plus-one {
  display: flex;
  align-items: center;
  gap: 9px;
  width: 50px;
  height: 20px;
  background: linear-gradient(#fcfcfc, #e2e2e2);
  border: 1px solid #bbb;
  border-radius: 3px;
  font: bold 10px/14px var(--ui);
  color: #a83c30;
}
.plus-one .g { font: bold 19px/16px 'Liberation Serif', serif; color: #c0422e; }

/* Scroll bars */
.scroll {
  display: flex;
  flex-direction: column;
  justify-content: space-between;
  align-items: center;
  width: 16px;
  padding: 8px 0;
  background: #f0f0f1;
  color: #4c4c4c;
}
.idle { color: #8a8a8a; }
.sarrow { width: 8px; height: 4px; }
.track {
  flex: 1;
  align-self: stretch;
  padding: 7px 0;
}
.thumb-bar {
  background:
    repeating-linear-gradient(#666 0 1px, transparent 1px 3px) center / 7px 7px no-repeat,
    linear-gradient(90deg, #f6f6f6, #e2e2e4 50%, #c3c5c8 60%, #d8d9db);
  border: 1px solid #94979b;
  border-radius: 2px;
}

/* Reports */
.report {
  display: flex;
  background: #fff;
  border: 1px solid #9aa0aa;
  border-right-color: #8b9099;
}
.report .scroll { margin-right: 2px; }
.report-text {
  flex: 1;
  padding: 3px 2px 2px;
}
.report-text h3 {
  font: bold 11px/13px var(--ui);
  text-decoration: underline;
}
.report-text p { padding-left: 2px; }
.report-text p + h3,
.report-text .raw { padding-top: 13px; }
.report-text .raw { padding-left: 0; }
.tabs {
  display: flex;
  height: 30px;
  padding-bottom: 5px;
  background: linear-gradient(#fff 3px, #6b7079 3px 4px, var(--bar) 4px, #e0e4f4);
  border-bottom: 1px solid #8d929c;
}
.tabs button {
  display: flex;
  align-items: center;
  gap: 3px;
  margin-top: 3px;
  padding: 0 2px;
  font: 11px/16px var(--title);
  color: #70747f;
}
.tabs .active {
  color: #222;
  background: #fff;
  border: 1px solid #6b7079;
  border-top: none;
  border-radius: 0 0 4px 4px;
}

/* Right dock */
.dock {
  width: 21px;
  padding: 2px 0 0 3px;
  background: var(--bar);
  border-left: 1px solid #eef0f8;
}
.dock button {
  display: flex;
  align-items: center;
  gap: 2px;
  height: 92px;
  writing-mode: vertical-rl;
  border: 1px solid #6b7079;
  border-right: none;
  border-radius: 4px 0 0 4px;
  font: 11px/16px var(--title);
  color: #6a6d78;
}
.dock .i16 { transform: rotate(90deg); }

/* Status bar */
.status {
  display: grid;
  grid-template-columns: 1fr 232px 21px;
  height: 23px;
  background: #f0eded;
  border-bottom: 1px solid #fff;
  font: 11px/22px var(--title);
}
.status span { padding-left: 2px; }
.status span + span { border-left: 1px solid #d2cfcf; }
.watermark {
  position: absolute;
  right: 7px;
  bottom: 16px;
  font: bold 33px/32px Inter, sans-serif;
  color: rgba(110, 112, 130, .65);
}
.watermark span { margin-right: 4px; color: rgba(140, 200, 110, .75); }

/* Session dialog */
.dialog {
  position: absolute;
  left: 699px;
  top: 350px;
  width: 614px;
  padding: 0 6px 6px;
  background: linear-gradient(#d3e6ee 0, #d3e6ee 134px, #b8d4de 134px, #c4dfe6);
  border: 1px solid #1c262e;
  border-radius: 7px;
  box-shadow: inset 0 0 0 1px #eaf6fa, 2px 3px 10px 3px rgba(0, 0, 0, .6);
}
.dialog-head {
  display: flex;
  align-items: center;
  gap: 5px;
  height: 28px;
}
.dialog-head h2 {
  flex: 1;
  font: 11px/16px var(--title);
}
.dialog-close {
  display: flex;
  align-items: center;
  justify-content: center;
  align-self: flex-start;
  width: 47px;
  height: 19px;
  background: linear-gradient(#e5a596, #d06a58 45%, #b53220 50%, #cf6045);
  border: 1px solid #5a2a26;
  border-top: none;
  border-radius: 0 0 4px 4px;
}
.dialog-close svg { width: 10px; height: 9px; }
.dialog-body {
  position: relative;
  padding: 13px 10px 10px;
  background: #f0f0f0;
  border: 1px solid #5d7480;
}
.label { display: block; height: 15px; }
.box {
  background: #fff;
  border: 1px solid var(--line);
}
.sources {
  height: 49px;
  margin-top: 1px;
  padding: 2px 5px;
}
.sources li { gap: 1px; }
.box li {
  display: flex;
  align-items: center;
}
.source-actions {
  display: flex;
  justify-content: flex-end;
  gap: 7px;
  padding: 6px 2px 9px;
}
.btn {
  width: 73px;
  height: 21px;
  background: linear-gradient(#f4f4f4, #ececec 50%, #dcdcdc 50%, #cfcfcf);
  border: 1px solid #707070;
  border-radius: 3px;
}
.btn:disabled {
  background: #f4f4f4;
  border-color: #adb2b5;
  color: #8a8a8a;
}
.source-actions .btn:first-child { width: 63px; }
.split {
  display: flex;
  align-items: center;
  justify-content: space-between;
  padding: 0 2px 0 5px;
}
.split i { width: 1px; height: 15px; background: #555; }
.columns {
  display: grid;
  grid-template-columns: 286px 1fr;
  gap: 5px;
}
.col {
  display: flex;
  flex-direction: column;
  min-width: 0;
}
.mini-tools {
  display: flex;
  align-items: center;
  gap: 12px;
  height: 29px;
  padding: 0 0 2px 6px;
}
.list {
  display: flex;
  height: 93px;
  overflow: hidden;
}
.groups {
  flex: 1;
  padding: 1px 4px 0 5px;
}
.list .scroll { margin-right: 2px; }
.group {
  display: flex;
  align-items: center;
  gap: 5px;
  height: 20px;
  padding: 0 5px 0 8px;
  color: #1c3287;
}
ul + .group { margin-top: 3px; }
.group i { flex: 1; height: 1px; margin-right: 6px; background: #cfd6ea; }
.chevron { width: 8px; height: 6px; }
.groups li { height: 18px; }
.groups li span { flex: 1; padding: 2px 1px; }
.groups .selected span { background: #3399ff; color: #fff; }
.chosen {
  flex-direction: column;
  padding: 1px 5px;
}
.chosen li { gap: 1px; height: 17px; }
.col > .list + .label { padding-top: 2px; height: 17px; }
.description {
  height: 113px;
  padding-top: 27px;
  background: #fff;
  border: solid #696969;
  border-width: 2px 0 0 1px;
  white-space: nowrap;
}
.filter-row {
  display: flex;
  gap: 3px;
}
.select-wrap {
  display: grid;
  align-items: center;
  width: 244px;
}
.select-wrap select {
  grid-area: 1 / 1;
  height: 21px;
  padding: 0 3px;
  appearance: none;
  background: #f2f2f2;
  border: 1px solid #adb2b5;
  border-radius: 3px;
  font: inherit;
  color: #7a7a7a;
  opacity: 1;
}
.select-wrap .arrow {
  grid-area: 1 / 1;
  justify-self: end;
  margin-right: 4px;
  color: #8a8a8a;
}
.filter-row .btn { width: 38px; }
.filter-label { height: 25px; padding: 5px 2px 0; }
.filter-text {
  height: 67px;
  padding: 3px 4px;
  border: 1px solid #fff;
  border-top-color: #aaa;
  border-left-color: #d8d8d8;
}
.dialog-actions {
  display: flex;
  justify-content: flex-end;
  gap: 5px;
  margin-top: 5px;
  padding-top: 4px;
  border-top: 1px solid #a0a0a0;
}
.grip {
  position: absolute;
  right: 1px;
  bottom: 1px;
  width: 9px;
  height: 9px;
}
```
